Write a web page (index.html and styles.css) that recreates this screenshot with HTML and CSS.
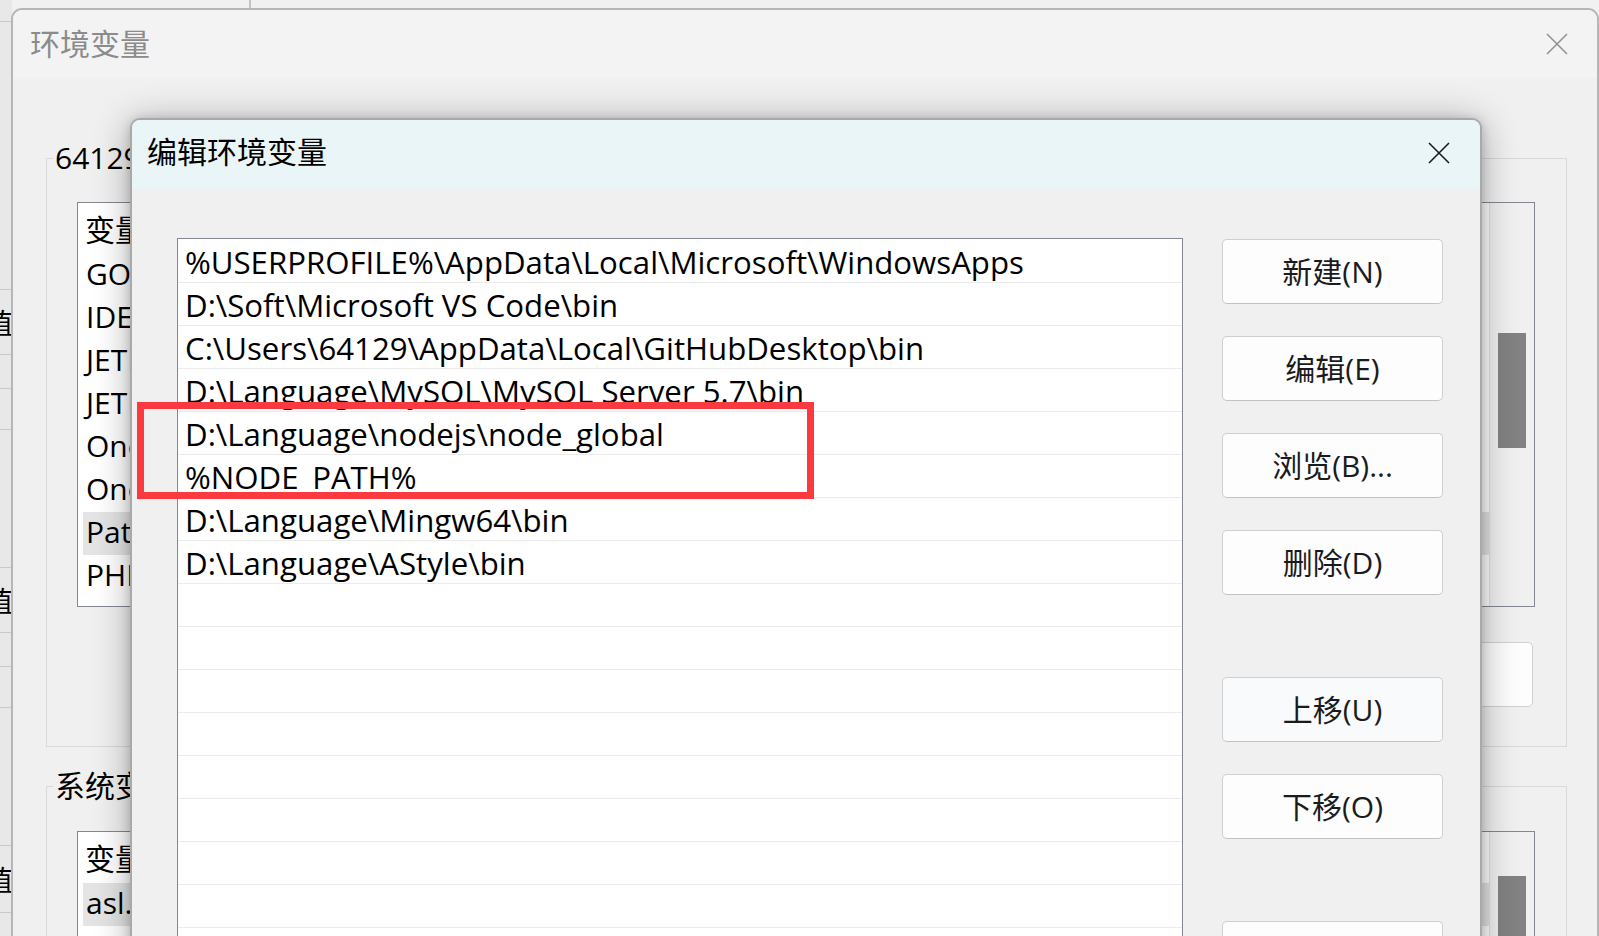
FILE: index.html
```html
<!DOCTYPE html>
<html lang="zh-CN">
<head>
<meta charset="utf-8">
<title>编辑环境变量</title>
<link rel="stylesheet" href="styles.css">
</head>
<body>
<div class="desk">
  <div class="bg-top-line"></div>
  <div class="bg-strip">
    <div class="bg-cell c1"></div>
    <div class="bg-cell c2"></div>
    <div class="bg-cell c3"><span>值</span></div>
    <div class="bg-cell c4"></div>
    <div class="bg-cell c5"></div>
    <div class="bg-cell c6"></div>
    <div class="bg-cell c3"><span>值</span></div>
    <div class="bg-cell c4"></div>
    <div class="bg-cell c5"></div>
    <div class="bg-cell c6"></div>
    <div class="bg-cell c7"><span>值</span></div>
  </div>

  <section class="outer">
    <header class="outer-title">
      <span class="outer-name">环境变量</span>
      <svg class="x-outer" width="22" height="22" viewBox="0 0 22 22"><path d="M1 1L21 21M21 1L1 21" stroke="#8e8e8e" stroke-width="1.5" fill="none"/></svg>
    </header>
    <div class="outer-body">
      <div class="group">
        <div class="legend">64129 的用户变量(U)</div>
        <div class="olist">
          <div class="olist-main">
            <div class="ohead"><span class="col1">变量</span><span>值</span></div>
            <div class="orow">GOPATH</div>
            <div class="orow">IDEA_VM_OPTIONS</div>
            <div class="orow">JETBRAINSCLIENT_VM_OPTIONS</div>
            <div class="orow">JETBRAINS_CLIENT_VM_OPTIONS</div>
            <div class="orow">OneDrive</div>
            <div class="orow">OneDriveConsumer</div>
            <div class="orow sel">Path</div>
            <div class="orow">PHPSTORM_VM_OPTIONS</div>
          </div>
          <div class="oscroll t1"><div class="thumb"></div></div>
        </div>
        <div class="obtns">
          <button class="obtn">新建(N)...</button>
          <button class="obtn">编辑(E)...</button>
          <button class="obtn">删除(D)</button>
        </div>
      </div>
      <div class="group g2">
        <div class="legend">系统变量(S)</div>
        <div class="olist l2">
          <div class="olist-main">
            <div class="ohead"><span class="col1">变量</span><span>值</span></div>
            <div class="orow sel">asl.log</div>
            <div class="orow">ComSpec</div>
            <div class="orow">DriverData</div>
          </div>
          <div class="oscroll t2"><div class="thumb"></div></div>
        </div>
      </div>
    </div>
  </section>

  <section class="dialog">
    <header class="dlg-title">
      <span>编辑环境变量</span>
      <svg class="x-dlg" width="22" height="22" viewBox="0 0 22 22"><path d="M1 1L21 21M21 1L1 21" stroke="#1b1b1b" stroke-width="1.6" fill="none"/></svg>
    </header>
    <div class="dlg-body">
      <div class="plist">
        <div class="prow">%USERPROFILE%\AppData\Local\Microsoft\WindowsApps</div>
        <div class="prow">D:\Soft\Microsoft VS Code\bin</div>
        <div class="prow">C:\Users\64129\AppData\Local\GitHubDesktop\bin</div>
        <div class="prow">D:\Language\MySQL\MySQL Server 5.7\bin</div>
        <div class="prow">D:\Language\nodejs\node_global</div>
        <div class="prow">%NODE_PATH%</div>
        <div class="prow">D:\Language\Mingw64\bin</div>
        <div class="prow">D:\Language\AStyle\bin</div>
        <div class="prow"></div>
        <div class="prow"></div>
        <div class="prow"></div>
        <div class="prow"></div>
        <div class="prow"></div>
        <div class="prow"></div>
        <div class="prow"></div>
        <div class="prow"></div>
        <div class="prow"></div>
      </div>
      <div class="btns">
        <button class="btn">新建(N)</button>
        <button class="btn">编辑(E)</button>
        <button class="btn">浏览(B)...</button>
        <button class="btn gap">删除(D)</button>
        <button class="btn hover">上移(U)</button>
        <button class="btn gap">下移(O)</button>
        <button class="btn">编辑文本(T)...</button>
      </div>
    </div>
  </section>

  <div class="mark"></div>
</div>
</body>
</html>
```

FILE: styles.css
```css
* { box-sizing: border-box; margin: 0; padding: 0; }

html, body {
  width: 1599px;
  height: 936px;
  overflow: hidden;
}

body {
  font-family: "Open Sans", "Noto Sans CJK SC", sans-serif;
  font-size: 30px;
  color: #000;
  background: #f1f1f1;
}

.desk {
  position: relative;
  width: 1599px;
  height: 936px;
  overflow: hidden;
  background: #f1f1f1;
}

/* window behind everything */
.bg-top-line {
  position: absolute;
  left: 249px;
  top: 0;
  width: 2px;
  height: 10px;
  background: #c4c4c4;
}

.bg-strip {
  position: absolute;
  left: 0;
  top: 0;
  width: 12px;
  height: 936px;
  background: #e8e8e8;
  display: flex;
  flex-direction: column;
  overflow: hidden;
}

.bg-cell {
  flex-shrink: 0;
  border-bottom: 1px solid #c9c9c9;
  display: flex;
  justify-content: flex-end;
  align-items: center;
  overflow: hidden;
  font-size: 28px;
}
.bg-cell span { flex-shrink: 0; margin-right: -1px; }
.c1 { height: 22px; }
.c2 { height: 268px; }
.c3 { height: 65px; }
.c4 { height: 34px; }
.c5 { height: 41px; }
.c6 { height: 138px; }
.c7 { height: 67px; }

/* outer window: 环境变量 */
.outer {
  position: absolute;
  left: 11px;
  top: 8px;
  width: 1588px;
  height: 980px;
  border: 2px solid #b6b6b6;
  border-radius: 11px 11px 0 0;
  background: #f0f0f0;
  display: flex;
  flex-direction: column;
}

.outer-title {
  height: 68px;
  flex-shrink: 0;
  display: flex;
  align-items: center;
  justify-content: space-between;
  padding: 0 29px 0 17px;
  color: #8b8b8b;
  background: #f3f3f3;
  border-radius: 9px 9px 0 0;
}
.outer-name { margin-bottom: 4px; }

.outer-body {
  padding: 80px 30px 0 33px;
}

.group {
  border: 1px solid #d9d9d9;
}
.group.g2 { margin-top: 39px; }

.legend {
  display: table;
  height: 34px;
  line-height: 31px;
  margin: -17px 0 0 6px;
  padding: 0 2px;
  background: #f0f0f0;
  white-space: nowrap;
}

.olist {
  display: flex;
  height: 405px;
  margin: 26px 31px 0 30px;
  border: 1px solid #828790;
  background: #fff;
}
.olist.l2 { margin-top: 27px; height: 300px; }

.olist-main {
  flex: 1;
  min-width: 0;
  overflow: hidden;
}

.ohead {
  height: 51px;
  display: flex;
  align-items: center;
  padding: 0 0 1px 7px;
  white-space: nowrap;
}
.ohead .col1 { width: 520px; }

.orow {
  height: 43px;
  line-height: 40px;
  margin-left: 5px;
  padding-left: 3px;
  white-space: nowrap;
}
.orow.sel { background: #e4e4e4; }

.oscroll {
  width: 45px;
  flex-shrink: 0;
  background: #f0f0f0;
  border-left: 1px solid #e2e2e2;
  padding: 130px 8px 0;
}
.oscroll.t2 { padding-top: 44px; }
.thumb {
  height: 115px;
  background: #828282;
}

.obtns {
  display: flex;
  justify-content: flex-end;
  gap: 30px;
  margin: 35px 33px 39px 0;
}
.obtn {
  width: 221px;
  height: 65px;
  font: inherit;
  color: #1b1b1b;
  background: #fdfdfd;
  border: 1px solid #d0d0d0;
  border-radius: 5px;
}

/* dialog: 编辑环境变量 */
.dialog {
  position: absolute;
  left: 130px;
  top: 118px;
  width: 1352px;
  height: 860px;
  border: 2px solid #a9a9a9;
  border-radius: 10px 10px 0 0;
  background: #f0f0f0;
  display: flex;
  flex-direction: column;
  box-shadow: 0 4px 36px rgba(0, 0, 0, 0.32), 0 1px 10px rgba(0, 0, 0, 0.16);
}

.dlg-title {
  height: 69px;
  flex-shrink: 0;
  display: flex;
  align-items: center;
  justify-content: space-between;
  padding: 0 30px 3px 15px;
  background: #e9f5f7;
  border-radius: 8px 8px 0 0;
}
.dlg-title span { margin-bottom: 6px; }

.dlg-body {
  display: flex;
  gap: 39px;
  padding: 49px 37px 0 45px;
}

.plist {
  width: 1006px;
  height: 760px;
  flex-shrink: 0;
  border: 1px solid #828790;
  background: #fff;
  padding-top: 1px;
  overflow: hidden;
}

.prow {
  height: 43px;
  padding: 1px 0 0 7px;
  line-height: 42px;
  font-size: 31.2px;
  border-bottom: 1px solid #ebebeb;
  white-space: nowrap;
  overflow: hidden;
}

.btns {
  display: flex;
  flex-direction: column;
  width: 221px;
  margin-top: 1px;
}

.btn {
  height: 65px;
  flex-shrink: 0;
  margin-bottom: 32px;
  padding-bottom: 4px;
  font: inherit;
  color: #1b1b1b;
  background: #fdfdfd;
  border: 1px solid #cfcfcf;
  border-bottom-color: #c2c2c2;
  border-radius: 5px;
}
.btn.gap { margin-bottom: 82px; }
.btn.hover { background: #f9fafc; }

/* red annotation */
.mark {
  position: absolute;
  left: 137px;
  top: 402px;
  width: 677px;
  height: 97px;
  border: 7px solid #fa3a3e;
}
```
